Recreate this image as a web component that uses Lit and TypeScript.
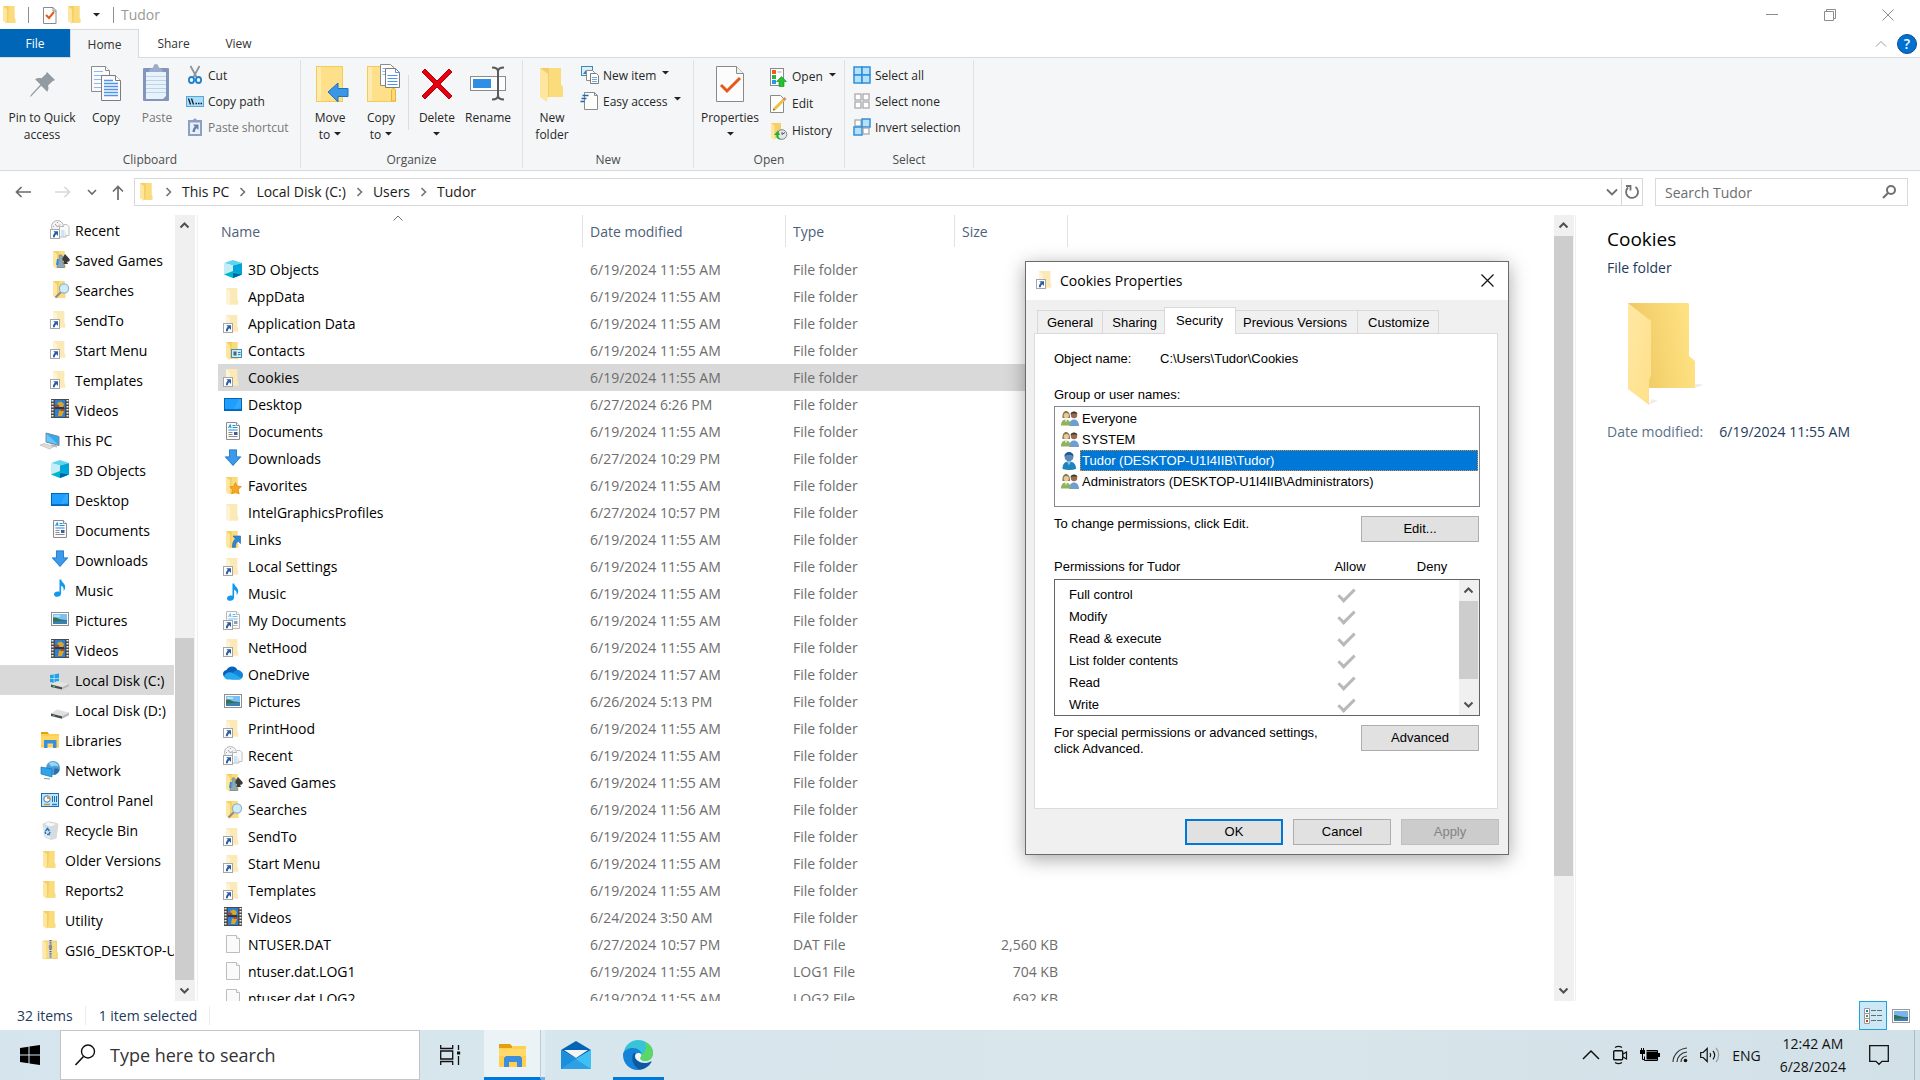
import { LitElement, html, svg, css, nothing, TemplateResult } from "lit";
import { customElement } from "lit/decorators.js";
import { classMap } from "lit/directives/class-map.js";

/* ---------- icon parts ---------- */

const folderPart = svg`
  <path d="M3 1h11.4v12l.9.8v4H6z" fill="#f3cf66"/>
  <path d="M9 1h5.4v12l.9.8v4H8z" fill="#fbdc7c"/>
  <path d="M3 1l4 3.2v11l-.5 3.8L3 16z" fill="#ffe69f"/>`;
const palePart = svg`
  <path d="M3 1h11.4v12l.9.8v4H6z" fill="#fbeab8"/>
  <path d="M3 1l4 3.2v11l-.5 3.8L3 16z" fill="#fdf4d6"/>`;
const linkPart = svg`
  <rect x=".5" y="9.5" width="9" height="9" fill="#fff" stroke="#a6a6a6"/>
  <path d="M3.300 11.200H8v4.700l-1.600-1.600c-1 .6-1.500 1.400-1.600 3H2.900c0-2 .6-3.500 2-4.500z" fill="#2a5da8"/>`;
const docPart = svg`
  <path d="M3.500.5h10l3 3v14h-13z" fill="#fafafa" stroke="#8c8c8c"/>
  <path d="M13.500.5v3h3" fill="#fff" stroke="#8c8c8c"/>
  <path d="M5.500 6l1.800-3.500L8 6M6 4.800h2M9.500 3.500h3M9.500 5.500h5M5.500 8h9" stroke="#1e90dd" fill="none"/>
  <path d="M5.500 10.500h4M5.500 12.500h4M5.500 14.500h9" stroke="#8c8c8c"/>
  <rect x="11" y="10" width="3.500" height="3" fill="#3b5f96"/>`;
const fadedDoc = svg`<g opacity=".6">${docPart}</g>`;
const cubePart = svg`
  <path d="M1 3l9-3 9 3-9 2.500z" fill="#5fd4f0"/>
  <path d="M1 3l9 2.500V18l-9-3.500z" fill="#c5edf7"/>
  <path d="M10 5.500L19 3v11.500L10 18z" fill="#00a4d8"/>
  <path d="M1 14.500l9-3.500 9 3.500L10 18z" fill="#00b7c9"/>
  <path d="M10 13v5l9-3.500z" fill="#0063b1"/>`;

const parts: Record<string, TemplateResult> = {
  folder: folderPart,
  pale: palePart,
  paleLink: svg`${palePart}${linkPart}`,
  docLink: svg`${fadedDoc}${linkPart}`,
  cube: cubePart,
  file: svg`<path d="M3.500.5h10l3 3v14h-13z" fill="#fafafa" stroke="#bdbdbd"/><path d="M13.500.5v3h3" fill="#fff" stroke="#bdbdbd"/>`,
  doc: docPart,
  contacts: svg`${folderPart}
    <rect x="8.500" y="8.500" width="10" height="8" fill="#cdeaf8" stroke="#3f8fb8"/>
    <rect x="10.500" y="10.500" width="3" height="4" fill="#4d6478"/><path d="M15 11.500h2.500M15 13.500h2.500" stroke="#2f7fae"/>`,
  desktop: svg`<rect x="1.500" y="3.500" width="17" height="12" fill="#1e9fff" stroke="#0067b8"/>
    <path d="M10 15L16 4h2v8z" fill="#45b1ff" opacity=".5"/><path d="M2 14.500h16" stroke="#0a6fc0"/>`,
  downloads: svg`<path d="M6 .5h8v7h4.500L10 17 1.500 7.500H6z" fill="#2f8be0"/><path d="M6.500 1h7v7h3.800L10 16.200 2.700 8h3.800z" fill="#3d9aeb" stroke="#2477c9" stroke-width=".6"/>`,
  favorites: svg`${folderPart}<path d="M12.500 6.500l1.700 3.500 4.200.6-3.100 2.800.9 4.600-3.900-2-3.600 1.800.7-4-2.600-3 3.800-.6z" fill="#f5a623" stroke="#d98410" stroke-width=".6"/>`,
  links: svg`${folderPart}<path d="M10 6h7.500v7.500l-2.400-2.200c-2 1.200-2.600 3-2.600 6H9.300c0-4 1-6.500 3.100-8.400z" fill="#2f86d8" stroke="#1f62a8" stroke-width=".6"/>`,
  music: svg`<path d="M9.500-.5h1.700c.4 3 4 4 4 7.500 0 1.800-.6 3-1.600 4.200.5-3-.5-4.700-2.500-5.400v7.700c0 2-1.800 3.300-3.800 3.300C5.300 16.800 4 15.900 4 14.400c0-1.700 1.700-3 3.700-3 .7 0 1.300.1 1.800.4z" fill="#1199ee"/>`,
  onedrive: svg`
    <path d="M4.500 13C1.500 13 0 11 0 9s1.600-3.700 3.500-3.900C4.700 2.900 6.700 1.500 9 1.500c2.800 0 4.700 1.500 5.600 3.800z" fill="#0a5fb8"/>
    <path d="M10 7l4-2c3 0 6 2 6 5.300 0 2.500-1.900 4.200-4.300 4.200H8z" fill="#1284dc"/>
    <path d="M1 11.500C2 8.500 6 6 10 8.200l8.800 5c-.8.9-2 1.300-3.100 1.300H4.500c-1.700 0-3-1.500-3.500-3z" fill="#27a9f0"/>`,
  pictures: svg`<rect x="1.500" y="2.500" width="17" height="13" fill="#fff" stroke="#8f8f8f"/>
    <rect x="3" y="4" width="14" height="10" fill="#7cc0f2"/>
    <path d="M3 8c3-1.500 5 1 8 1.500 2 .3 4 .3 6 .8V14H3z" fill="#33734f"/><path d="M3 11.500c4 0 9-1 14-1V14H3z" fill="#3a7fb5"/><path d="M4 6h6" stroke="#fff"/>`,
  videos: svg`<rect x="1" y="-1" width="18" height="19" fill="#4a4a4a"/>
    <path d="M2.500 0v17M17.500 0v17" stroke="#f2f2f2" stroke-width="2" stroke-dasharray="1.600 1.400"/>
    <rect x="5" y="0" width="10" height="8" fill="#2c7fd4"/><rect x="5" y="9" width="10" height="8" fill="#2c7fd4"/>
    <path d="M7 3l4-1.500 3 2.500-1 3h-3z" fill="#d8a728"/><path d="M5 5h4v2H5z" fill="#c43d2c"/>
    <path d="M9 10.500l5 .5-2 5H8z" fill="#d8a728"/><path d="M11 9h3v2h-3z" fill="#c43d2c"/><path d="M5 7h9v2H5z" fill="#2b3a3a"/>`,
  recent: svg`<g><circle cx="7.500" cy="6.500" r="6" fill="#f4f4f4" stroke="#b5b5b5"/><path d="M7.500 2v1M3 6.500h1M7.500 7L10 4.500M5 4l2.500 3" stroke="#a0a0a0" fill="none"/>
    <path d="M9.500 6.500h5l1.500 1.500v9H9.500z" fill="#f8fbfd" stroke="#b5b5b5"/><path d="M13.500 4.500h3.500l2 2v9h-3" fill="#fafafa" stroke="#c0c0c0"/><path d="M11 11h3.500M11 13h3.500M11 15h3.500" stroke="#9fd0ef"/></g>${linkPart}`,
  games: svg`${folderPart}
    <path d="M15 4l4.500 5c.8 1.700-.6 3.200-2.500 2.700L18 14h-5l1-3c-1.800 0-2.600-1.600-1.500-3z" fill="#3a3a3a"/>
    <path d="M9 5.500a2 2 0 0 1 3.500 1.500l-.5 1.500 1 4 1.500 3v2H7l.3-2 1.700-3.500.3-3.500z" fill="#8da9b8" stroke="#5c7a8c" stroke-width=".6"/><path d="M8 9l-1 6" stroke="#2f86d8" stroke-width="2"/>`,
  searches: svg`${folderPart}<path d="M11 12l-5.500 5.500" stroke="#8d8d8d" stroke-width="2.200"/><circle cx="14" cy="8.500" r="4.600" fill="#cfeaf8" stroke="#8fb4c8" stroke-width="1.200"/>`,
  pc: svg`<path d="M6 3l13 3.500v9L6 12z" fill="#33a9f0" stroke="#7a8790"/><path d="M6.500 3.800L18 14.500 6.500 11.500z" fill="#6cc5f8"/>
    <path d="M11 14l6 1.500v2l-5-1z" fill="#b9b9b9"/><path d="M0 15l4-1.500 10 3-4.500 2.500z" fill="#dcdcdc" stroke="#b4b4b4" stroke-width=".6"/>`,
  driveC: svg`<path d="M0 5l3.700-.6v3.800H0zM4.500 4.300L9 3.600v4.600H4.500zM0 9h3.700v3.700L0 12.100zM4.500 9H9v4.500l-4.500-.7z" fill="#18a5ee"/>
    <path d="M1 14.500L7 11l12 3-7 3.300z" fill="#e3e3e3"/><path d="M1 14.500l11 2.800v2.200L1 17z" fill="#4b4b4b"/><path d="M12 17.300l7-3.300v2.300l-7 3.200z" fill="#b9b9b9"/><path d="M3 16.400l2 .5" stroke="#3ad16a" stroke-width="1.200"/>`,
  driveD: svg`<path d="M1 13.500L7 9.500l12 3-7 3.800z" fill="#e0e0e0"/><path d="M1 13.500l11 2.800v2.500L1 16z" fill="#4b4b4b"/><path d="M12 16.300l7-3.800v2.700l-7 3.600z" fill="#b9b9b9"/><path d="M3 15.500l2 .5" stroke="#3ad16a" stroke-width="1.200"/>`,
  libraries: svg`<path d="M1 2h6.500L9 4h10v13.500H1z" fill="#ffcf4f"/><path d="M1 2h6.500L9 4H1z" fill="#e0a010"/><path d="M1 6h18v9H1z" fill="#ffd763"/><path d="M4 18v-8h12.500v8H13v-4.500H7.500V18z" fill="#3b8fdd"/>`,
  network: svg`<g transform="translate(1)"><circle cx="12" cy="8" r="7" fill="#4a9fd8"/><path d="M8 3c3-2 8-1 9.500 3-2 1-3-1-5 0S9 6 8 3z" fill="#9cd3f2"/><path d="M13 9c2-1 4 0 5.500.5C18 12 16 14.500 13 15z" fill="#2d6fa8"/>
    <path d="M0 7l11 2v8L0 14z" fill="#2aa5ee" stroke="#2b6d9e" stroke-width=".7"/><path d="M3 18.500l6 .5" stroke="#8a9aa5"/></g>`,
  control: svg`<g transform="translate(1)"><rect x=".5" y="3.500" width="17" height="13" fill="#bfe6fb" stroke="#1b6fb5"/><circle cx="6" cy="9" r="3.200" fill="#f5fbff" stroke="#2a7fc7"/><path d="M6 9V5.800A3.200 3.200 0 0 1 9.200 9z" fill="#f29a2e"/>
    <path d="M11.500 6v6M13.500 6v6M15.500 6v6" stroke="#1b6fb5"/><path d="M3 14.500h6" stroke="#e88b22" stroke-width="1.500"/><path d="M11 14.500h5" stroke="#2a7fc7" stroke-width="1.500"/></g>`,
  bin: svg`<g transform="translate(1)"><path d="M2 4l7-2 8 2-2 14-5 1.500L4 17z" fill="#eceff1" stroke="#c4cacd" stroke-width=".7"/><path d="M2 4l7 2 8-2-1.500 14-5.500 1.500z" fill="#d6dbde"/><path d="M3 4.500l4-3 4 1.500 4 0-2 3-4 1z" fill="#f7f7f7" stroke="#c8cdd0" stroke-width=".6"/>
    <path d="M4.500 11l2-2.500 2 2.500M9 12l-1 2.500H6M4.800 14l-.6-2.500" fill="none" stroke="#1f78cc" stroke-width="1.500"/></g>`,
  zip: svg`<g transform="translate(1)"><path d="M2 1h13.500v11l.8.800V18.500H2z" fill="#fbdc7c" stroke="#e4bd4d" stroke-width=".6"/><path d="M2 1l3 1.500v17L2 18z" fill="#ffe9a8"/><rect x="7.500" y="0" width="4" height="18" fill="#dcdcdc"/><path d="M9.500 0v18" stroke="#5c5c5c" stroke-width="2" stroke-dasharray="1.200 1"/><rect x="7.800" y="5" width="3.400" height="4" rx="1" fill="#8b8b8b"/></g>`,
};

const icon = (name: string) => html`<svg class="ico" viewBox="0 0 20 20" aria-hidden="true">${parts[name]}</svg>`;
const pic = (w: number, h: number, body: TemplateResult) =>
  html`<svg width=${w} height=${h} viewBox="0 0 ${w} ${h}" fill="none" aria-hidden="true">${body}</svg>`;

const caret = html`<svg class="caret" width="7" height="4" viewBox="0 0 7 4" aria-hidden="true"><path d="M0 0h7L3.500 3.500z" fill="#222"/></svg>`;
const chevUp = pic(11, 11, svg`<path d="M1.500 7.500l4-4 4 4" stroke="#505050" stroke-width="2"/>`);
const chevDown = pic(11, 11, svg`<path d="M1.500 3.500l4 4 4-4" stroke="#505050" stroke-width="2"/>`);
const crumbSep = pic(7, 10, svg`<path d="M1.500 1l4 4-4 4" stroke="#6e6e6e" stroke-width="1.500"/>`);

const checkDoc = svg`<path d="M1 1h9.500l3 3v13H1z" transform="translate(.5 .5)" fill="#fff" stroke="#8a8a8a"/><path d="M11 1.500v3.500h3" stroke="#8a8a8a"/><path d="M4 9l3 3 5-6" stroke="#e8571a" stroke-width="2"/>`;

const big: Record<string, TemplateResult> = {
  pin: svg`<path transform="translate(5 1)" d="M19 6l8 8-2.500 1.200-4.500 4.300c.8 2.400.6 4.300-.8 6.300l-6-6L3.500 30 2 31l.8-2 9.600-10.500-5.300-5.300c2-1.500 4.200-1.600 6.400-.9l4.300-4z" fill="#919ba1"/>`,
  copy: svg`<path d="M4.500 1.500h14l4 4v21h-18z" fill="#fafafa" stroke="#8c8c8c"/><path d="M18.500 1.500v4h4" fill="#fff" stroke="#8c8c8c"/><path d="M7 6.500h9M7 10.500h9M7 14.500h8M7 18.500h8M7 22.500h8" stroke="#8cbaf0"/>
    <path d="M14.500 10.500h14l5 5v20h-19z" fill="#fafafa" stroke="#7c7c7c"/><path d="M28.500 10.500v5h5" fill="#fff" stroke="#7c7c7c"/><path d="M17 15.500h9M17 18.500h14M17 21.500h14M17 24.500h14M17 27.500h14M17 30.500h14" stroke="#4f93ef" stroke-width="1.500"/>`,
  paste: svg`<rect x="5" y="3" width="26" height="33" rx="1" fill="#8296bd"/><path d="M8 7h20v24l-3 3H8z" fill="#e8f2fa"/><path d="M8 11.500h20M8 15.500h20M8 19.500h20M8 23.500h20M8 27.500h20" stroke="#bdd3e6"/><path d="M11 7c0-4 4-3 4.500-5.500a2.500 2.500 0 0 1 5 0C21 4 25 3 25 7z" fill="#9aacc9"/>`,
  move: svg`<path d="M5 1h27v36H5z" fill="#f5cb52"/><path d="M6 2h25v34H6z" fill="#ffe08a"/><path d="M6 2h4v34H6z" fill="#ffeab0"/><path d="M17 27L27 18v5.500h10v8H27V37z" fill="#3a96e6" stroke="#2172ba"/>`,
  copyto: svg`<path d="M5 1h27v22l2 2v12H5z" fill="#f5cb52"/><path d="M6 2h25v34H6z" fill="#ffe08a"/><path d="M6 2h4v34H6z" fill="#ffeab0"/><path d="M29.500 36V25l2-2 2 2v11z" fill="#ffd870" stroke="#e2b544"/>
    <path d="M18.500-.5h10l3 3v18h-13z" fill="#fff" stroke="#8c8c8c"/><path d="M20.500 3.500h6M20.500 6.500h6M20.500 9.500h6" stroke="#8cbaf0"/><path d="M23.500 3.500h10l4 4v15h-14z" fill="#fff" stroke="#7c7c7c"/><path d="M33.500 3.500v4h4M25.500 10.500h10M25.500 13.500h10M25.500 16.500h10M25.500 19.500h10" stroke="#4f93ef"/>`,
  del: svg`<path d="M4 7l3-3 12 12L31 4l3 3-12 12 12 12-3 3-12-12L7 34l-3-3 12-12z" fill="#e8000f" stroke="#b40010" stroke-width="1"/>`,
  rename: svg`<rect x="1.500" y="11.500" width="35" height="14" fill="#fdfdfd" stroke="#8c8c8c"/><rect x="4" y="14" width="18" height="9" fill="#2f8fe4"/><path d="M23 2.500c4 0 6 1 6 4v24c0 3-2 4-6 4M35 2.500c-4 0-6 1-6 4v24c0 3 2 4 6 4" stroke="#5a5a5a" stroke-width="2"/>`,
  folder: svg`<path d="M7 3h21v17l2 2v10H12z" fill="#f2cd68"/><path d="M16 3h12v17l2 2v10H16z" fill="#fbdc7c"/><path d="M7 3l8 6v20l-1 8-7-5z" fill="#ffe69f"/>`,
  props: svg`<path d="M5.500 1.500h20l7 7v28h-27z" fill="#fcfcfc" stroke="#8a8a8a"/><path d="M25.500 1.500v7h7" fill="#f0f0f0" stroke="#8a8a8a"/><path d="M10 20l6 6L29 13" stroke="#e8571a" stroke-width="3"/>`,
};
const bigIcon = (n: string) => pic(38, 38, big[n]);

const sq = (x: number, y: number, on: boolean) => on
  ? svg`<rect x=${x} y=${y} width="8" height="8" fill="#b5e1fb" stroke="#2e8fdc" stroke-width="1.500"/>`
  : svg`<rect x=${x + 1} y=${y + 1} width="6" height="6" fill="#fff" stroke="#a3a3a3" stroke-width="1.200"/>`;

const small: Record<string, TemplateResult> = {
  cut: svg`<path d="M4.500 0l6 11M13.500 0l-6 11" stroke="#8c959b" stroke-width="1.800"/><ellipse cx="5.500" cy="14" rx="2.600" ry="3" stroke="#1d83cf" stroke-width="1.800"/><ellipse cx="12.500" cy="14" rx="2.600" ry="3" stroke="#1d83cf" stroke-width="1.800"/>`,
  path: svg`<rect x=".5" y="4.500" width="17" height="10" fill="#abdcf9" stroke="#5aa6d6"/><path d="M2.500 6.500l2 6M5.500 6.500l2 6M9.500 11.500h1.500M12 11.500h1.500M14.500 11.500h1.500" stroke="#10212e" stroke-width="1.300"/>`,
  pasteLink: svg`<rect x="2" y="2" width="14" height="16" fill="#8d9fc2"/><rect x="4" y="4.500" width="10" height="11.500" fill="#e8f0f8"/><path d="M6 4c0-3 2-2 3-4 1 2 3 1 3 4z" fill="#8d9fc2"/><path d="M7 6.500h5.500v5.500l-1.700-1.700c-1.200.7-1.800 1.700-1.800 3.700H6.500c0-2.300.7-4 2.300-5.500z" fill="#6a7fa8"/>`,
  item: svg`<rect x=".5" y=".5" width="11" height="9" fill="#d8f0fc" stroke="#3d8ab8"/><path d="M2 8l3-4 4 4z" fill="#3d7ba8"/><path d="M5.500 4.500h6l2 2v8h-8z" fill="#fff" stroke="#8c8c8c"/><path d="M9.500 7.500h6l2 2v8h-8z" fill="#fff" stroke="#7c7c7c"/><path d="M11 11.500h5M11 13.500h5M11 15.500h5" stroke="#6ea5df"/>`,
  easy: svg`<path d="M4.500.5h10l3 3v14h-13z" transform="translate(-1)" fill="#fdfdfd" stroke="#8a8a8a"/><path d="M13.500.5v3h3" stroke="#8a8a8a"/><path d="M1.500 3.500h6M.5 6.500h5M-.5 9.500h4" stroke="#2068b0" stroke-width="1.300"/>`,
  open: svg`<rect x=".5" y=".5" width="13" height="17" fill="#fdfdfd" stroke="#8a8a8a"/><rect x="2" y="2" width="4" height="4" fill="#f25a1d"/><rect x="2" y="7" width="4" height="4" fill="#27b53b"/><rect x="2" y="12" width="4" height="4" fill="#2795e9"/><path d="M7.500 4h4" stroke="#aaa"/><path d="M11.500 8.500l5 5h-2.500v5H9v-5H6.500z" fill="#23c030" stroke="#168a22" stroke-width=".6"/>`,
  edit: svg`<path d="M.5.500h10l3 3v14H.5z" fill="#fdfdfd" stroke="#8a8a8a"/><path d="M4 14.500L14 4.500" stroke="#f0c040" stroke-width="3"/><path d="M13.500 5l2-2" stroke="#d88b6a" stroke-width="3"/><path d="M3 15.500l.6-2 1.400 1.400z" fill="#444"/>`,
  history: svg`<path d="M1 1h10v12l-6 4z" fill="#f5d06a"/><path d="M1 1l3.500 3v14L1 15.500z" fill="#ffe69f"/><circle cx="12" cy="12.500" r="4.800" fill="#e4e8ea" stroke="#7a868d"/><path d="M12 12.500l3-2M12 12.500V10" stroke="#555"/><path d="M9 17.500c-2.500-1-3-3-2.500-4.500H4l4-4.500L10 13H8.500c-.3 1.500.2 3 2.500 4.500z" fill="#23b033"/>`,
  all: svg`${sq(1, 1, true)}${sq(9, 1, true)}${sq(1, 9, true)}${sq(9, 9, true)}`,
  none: svg`${sq(1, 1, false)}${sq(9, 1, false)}${sq(1, 9, false)}${sq(9, 9, false)}`,
  invert: svg`${sq(1, 1, false)}${sq(9, 1, true)}${sq(1, 9, true)}${sq(9, 9, false)}`,
};
const smallIcon = (n: string) => pic(18, 18, small[n]);

/* ---------- data ---------- */

type NavItem = [label: string, icon: string, level: 1 | 2];
const navItems: NavItem[] = [
  ["Recent", "recent", 2], ["Saved Games", "games", 2], ["Searches", "searches", 2], ["SendTo", "paleLink", 2],
  ["Start Menu", "paleLink", 2], ["Templates", "paleLink", 2], ["Videos", "videos", 2], ["This PC", "pc", 1],
  ["3D Objects", "cube", 2], ["Desktop", "desktop", 2], ["Documents", "doc", 2], ["Downloads", "downloads", 2],
  ["Music", "music", 2], ["Pictures", "pictures", 2], ["Videos", "videos", 2], ["Local Disk (C:)", "driveC", 2],
  ["Local Disk (D:)", "driveD", 2], ["Libraries", "libraries", 1], ["Network", "network", 1],
  ["Control Panel", "control", 1], ["Recycle Bin", "bin", 1], ["Older Versions", "folder", 1],
  ["Reports2", "folder", 1], ["Utility", "folder", 1], ["GSI6_DESKTOP-U1I4IIB", "zip", 1],
];

const usual = "6/19/2024 11:55 AM";
type Entry = [name: string, icon: string, date?: string, type?: string, size?: string];
const entries: Entry[] = [
  ["3D Objects", "cube"], ["AppData", "pale"], ["Application Data", "paleLink"], ["Contacts", "contacts"],
  ["Cookies", "paleLink"], ["Desktop", "desktop", "6/27/2024 6:26 PM"], ["Documents", "doc"],
  ["Downloads", "downloads", "6/27/2024 10:29 PM"], ["Favorites", "favorites"],
  ["IntelGraphicsProfiles", "pale", "6/27/2024 10:57 PM"], ["Links", "links"], ["Local Settings", "paleLink"],
  ["Music", "music"], ["My Documents", "docLink"], ["NetHood", "paleLink"],
  ["OneDrive", "onedrive", "6/19/2024 11:57 AM"], ["Pictures", "pictures", "6/26/2024 5:13 PM"],
  ["PrintHood", "paleLink"], ["Recent", "recent"], ["Saved Games", "games"],
  ["Searches", "searches", "6/19/2024 11:56 AM"], ["SendTo", "paleLink"], ["Start Menu", "paleLink"],
  ["Templates", "paleLink"], ["Videos", "videos", "6/24/2024 3:50 AM"],
  ["NTUSER.DAT", "file", "6/27/2024 10:57 PM", "DAT File", "2,560 KB"],
  ["ntuser.dat.LOG1", "file", usual, "LOG1 File", "704 KB"],
  ["ntuser.dat.LOG2", "file", usual, "LOG2 File", "692 KB"],
];

/* ---------- shared styles ---------- */

const base = css`
  *, *::before, *::after { box-sizing: border-box; }
  button, input { font: inherit; color: inherit; margin: 0; padding: 0; border: 0; background: none; border-radius: 0; }
  button { display: flex; align-items: center; justify-content: center; white-space: nowrap; }
  a { color: inherit; text-decoration: none; }
  svg { display: block; flex: none; overflow: visible; }
  .ico { width: 20px; height: 20px; }
`;

/* ---------- scrollbar ---------- */

@customElement("scroll-rail")
class ScrollRail extends LitElement {
  static properties = { from: { type: Number }, span: { type: Number } };
  declare from: number;
  declare span: number;
  static styles = [base, css`
    :host { display: flex; flex-direction: column; width: 20px; flex: none; background: #f0f0f0; }
    button { height: 21px; flex: none; width: 19px; }
    .track { flex: 1; display: flex; flex-direction: column; }
    .thumb { width: 19px; background: #cdcdcd; }
  `];
  render() {
    return html`
      <button aria-label="Scroll up">${chevUp}</button>
      <div class="track">
        <div style="flex:${this.from}"></div>
        <div class="thumb" style="flex:${this.span}"></div>
        <div style="flex:${100 - this.from - this.span}"></div>
      </div>
      <button aria-label="Scroll down">${chevDown}</button>`;
  }
}

/* ---------- ribbon ---------- */

@customElement("explorer-ribbon")
class ExplorerRibbon extends LitElement {
  static styles = [base, css`
    :host { display: block; font-size: 12px; color: #262626; }
    .tabs { display: flex; height: 29px; margin-bottom: -1px; padding-right: 3px; }
    .tab { width: 69px; color: #333; }
    .tab.file { width: 70px; background: #0067b8; color: #fff; margin-bottom: 1px; }
    .tab.on { background: #f5f6f7; border: 1px solid #d9dadb; border-bottom: 0; }
    .tab.view { width: 61px; }
    .tools { margin-left: auto; display: flex; align-items: center; gap: 10px; }
    .help { width: 20px; height: 20px; border-radius: 50%; background: #0071d1; border: 1px solid #0a508f; color: #fff; font-size: 14px; font-weight: 600; }
    .bar { display: flex; background: #f5f6f7; border: solid #d9dadb; border-width: 1px 0; height: 114px; padding: 2px 0; }
    .group { display: grid; grid-template-rows: 1fr 16px; border-right: 1px solid #e0e1e2; }
    .body { display: flex; padding-left: 2px; }
    .name { text-align: center; line-height: 16px; color: #4c4c4c; }
    .big { flex-direction: column; justify-content: flex-start; padding-top: 5px; line-height: 17px; white-space: normal; }
    .big span { margin-top: 6px; }
    .big .caret { display: inline-block; vertical-align: 3px; margin-left: 4px; }
    .big .caret.alone, .alone .caret { margin-left: 0; }
    .off { color: #767676; }
    .w1 { width: 48px; } .w2 { width: 54px; } .w3 { width: 80px; } .w4 { width: 68px; }
    .list { display: flex; flex-direction: column; padding: 2px 0 0 2px; }
    .list.wide { padding-left: 6px; }
    .list button { height: 26px; gap: 4px; justify-content: flex-start; }
    .list.open { padding-top: 3px; }
    .list.open button { height: 27px; }
    .list .caret { margin: 0 0 4px 2px; }
    .rule { width: 1px; height: 55px; margin: 15px 4px 0 3px; background: #dcdddf; }
    .g1 { width: 301px; } .g2 { width: 222px; } .g3 { width: 171px; } .g4 { width: 151px; } .g5 { width: 129px; }
  `];
  private big(name: string, label: unknown, cls: string) {
    return html`<button class="big ${cls}">${bigIcon(name)}<span>${label}</span></button>`;
  }
  private row(name: string, label: string, menu = false, cls = "") {
    return html`<button class=${cls}>${smallIcon(name)}${label}${menu ? caret : nothing}</button>`;
  }
  render() {
    return html`
      <nav class="tabs">
        <button class="tab file">File</button>
        <button class="tab on">Home</button>
        <button class="tab">Share</button>
        <button class="tab view">View</button>
        <div class="tools">
          <button aria-label="Minimize the ribbon">${pic(12, 8, svg`<path d="M1 6.500l5-5 5 5" stroke="#9a9a9a"/>`)}</button>
          <button class="help" aria-label="Help">?</button>
        </div>
      </nav>
      <div class="bar">
        <section class="group g1">
          <div class="body">
            ${this.big("pin", html`Pin to Quick<br>access`, "w3")}
            ${this.big("copy", "Copy", "w1")}
            ${this.big("paste", "Paste", "w2 off")}
            <div class="list">
              ${this.row("cut", "Cut")}${this.row("path", "Copy path")}${this.row("pasteLink", "Paste shortcut", false, "off")}
            </div>
          </div>
          <div class="name">Clipboard</div>
        </section>
        <section class="group g2">
          <div class="body">
            ${this.big("move", html`Move<br>to${caret}`, "w2")}
            ${this.big("copyto", html`Copy<br>to${caret}`, "w1")}
            <div class="rule"></div>
            ${this.big("del", html`Delete<br>${caret}`, "w1 alone")}
            ${this.big("rename", "Rename", "w2")}
          </div>
          <div class="name">Organize</div>
        </section>
        <section class="group g3">
          <div class="body">
            ${this.big("folder", html`New<br>folder`, "w2")}
            <div class="list">${this.row("item", "New item", true)}${this.row("easy", "Easy access", true)}</div>
          </div>
          <div class="name">New</div>
        </section>
        <section class="group g4">
          <div class="body">
            ${this.big("props", html`Properties<br>${caret}`, "w4 alone")}
            <div class="list wide open">${this.row("open", "Open", true)}${this.row("edit", "Edit")}${this.row("history", "History")}</div>
          </div>
          <div class="name">Open</div>
        </section>
        <section class="group g5">
          <div class="body">
            <div class="list wide">${this.row("all", "Select all")}${this.row("none", "Select none")}${this.row("invert", "Invert selection")}</div>
          </div>
          <div class="name">Select</div>
        </section>
      </div>`;
  }
}

/* ---------- properties dialog ---------- */

const groupIcon = pic(18, 16, svg`
  <circle cx="13" cy="4" r="3.200" fill="#9a6b48"/><path d="M9.500 3.500c0-4 7-4 7 0l-1-1h-4z" fill="#3b3b3b"/><path d="M8 15c0-4 2-6.500 5-6.500s5 2.500 5 6.500z" fill="#6f9fd0"/>
  <path d="M1.500 7c-1-9.500 8-9.500 7.500 0z" fill="#8a7a4a"/><circle cx="5.300" cy="4.600" r="2.600" fill="#e8c9a0"/><path d="M0 14.500c0-4 2-6 5-6s4.500 2 4.500 6z" fill="#8fb25c"/><path d="M4 8.500h2l-1 3z" fill="#fff"/>`);
const userIcon = pic(18, 18, svg`
  <circle cx="8" cy="5" r="4.400" fill="#5b88b8"/><path d="M3.500 4.500C3-1.500 13-1.500 12.500 4.500L10 3H6z" fill="#1f5f90"/><path d="M1.500 17c0-5 2-7.500 6.500-7.500s7 2.500 7 7.500c-4 1.300-9 1.300-13.500 0z" fill="#1d84bd"/><path d="M6 9.500h4l-2 4z" fill="#8fc6e6"/>`);

@customElement("properties-dialog")
class PropertiesDialog extends LitElement {
  static styles = [base, css`
    :host { display: block; background: #f0f0f0; border: 1px solid #6b6b6b; box-shadow: 0 4px 18px rgba(0, 0, 0, .35); font: 13px/16px "Liberation Sans", Arial, sans-serif; color: #000; }
    header { display: flex; align-items: center; gap: 4px; height: 38px; padding: 0 14px 2px 10px; background: #fff; font: 14px "Open Sans", "Noto Sans", sans-serif; }
    header button { margin-left: auto; }
    .tabs { display: flex; align-items: flex-end; padding: 7px 0 0 11px; margin-bottom: -1px; position: relative; }
    .tab { height: 24px; padding: 2px 9px 0; border: 1px solid #d9d9d9; margin-right: -1px; background: #f0f0f0; }
    .tab.s { padding: 2px 7px 0 9px; }
    .tab.on { height: 27px; padding: 0 12px 1px 11px; background: #fff; border-bottom: 0; }
    .tab.p { padding: 2px 10px 0 7px; }
    .tab.c { padding: 2px 8px 0 10px; }
    .panel { margin: 0 10px 0 8px; padding: 17px 17px 51px 19px; background: #fff; border: 1px solid #dcdcdc; }
    .object { display: grid; grid-template-columns: 106px 1fr; }
    .label { margin: 20px 0 3px; }
    .users { list-style: none; margin: 0; padding: 1px 1px 14px 6px; border: 1px solid #828790; }
    .users li { display: flex; align-items: center; height: 21px; }
    .users span { flex: 1; margin-left: 1px; padding-left: 2px; line-height: 21px; }
    .users .sel { background: #0078d7; color: #fff; outline: 1px dotted #e08a3c; outline-offset: -1px; }
    .line { display: flex; justify-content: space-between; margin-top: 9px; padding-right: 1px; }
    .line p { margin: 0; width: 290px; }
    .btn { height: 26px; width: 118px; background: #e1e1e1; border: 1px solid #adadad; }
    .heads { display: flex; margin: 17px 7px 4px 0; }
    .heads b { font-weight: 400; width: 82px; text-align: center; }
    .heads span { flex: 1; }
    .perms { display: flex; border: 1px solid #646464; }
    table { flex: 1; border-collapse: collapse; table-layout: fixed; margin-top: 3px; }
    td, th { padding: 2px 0 0; height: 22px; font-weight: 400; text-align: left; }
    th { padding-left: 14px; }
    .allow { width: 82px; text-align: center; }
    .deny { width: 72px; }
    input { appearance: none; display: inline-block; width: 18px; height: 18px; vertical-align: middle; }
    input::before { content: ""; display: block; width: 17px; height: 9px; margin: 3px 0 0 1px; border: solid #b9b9b9; border-width: 0 0 3px 3px; transform: rotate(-45deg); }
    footer { display: flex; justify-content: flex-end; gap: 10px; padding: 10px 9px 9px; }
    footer .btn { width: 98px; }
    .btn.ok { border: 2px solid #0078d7; }
    .btn[disabled] { background: #ccc; border-color: #bfbfbf; color: #838383; }
  `];
  render() {
    const users = ["Everyone", "SYSTEM", "Tudor (DESKTOP-U1I4IIB\\Tudor)", "Administrators (DESKTOP-U1I4IIB\\Administrators)"];
    const perms = ["Full control", "Modify", "Read & execute", "List folder contents", "Read", "Write"];
    return html`
      <header>${icon("paleLink")}<span>Cookies Properties</span>
        <button aria-label="Close">${pic(13, 13, svg`<path d="M.5.500l12 12M12.500.5l-12 12" stroke="#111" stroke-width="1.200"/>`)}</button></header>
      <div class="tabs">
        <button class="tab">General</button><button class="tab s">Sharing</button><button class="tab on">Security</button>
        <button class="tab p">Previous Versions</button><button class="tab c">Customize</button>
      </div>
      <div class="panel">
        <div class="object"><span>Object name:</span><span>C:\\Users\\Tudor\\Cookies</span></div>
        <div class="label">Group or user names:</div>
        <ul class="users">
          ${users.map((u, i) => html`<li>${i === 2 ? userIcon : groupIcon}<span class=${classMap({ sel: i === 2 })}>${u}</span></li>`)}
        </ul>
        <div class="line"><p>To change permissions, click Edit.</p><button class="btn">Edit...</button></div>
        <div class="heads"><span>Permissions for Tudor</span><b>Allow</b><b>Deny</b></div>
        <div class="perms">
          <table>
            ${perms.map((p, i) => html`<tr><th scope="row"><label for="p${i}">${p}</label></th>
              <td class="allow"><input id="p${i}" type="checkbox" checked disabled></td><td class="deny"></td></tr>`)}
          </table>
          <scroll-rail .from=${0} .span=${84}></scroll-rail>
        </div>
        <div class="line"><p>For special permissions or advanced settings, click Advanced.</p><button class="btn">Advanced</button></div>
      </div>
      <footer><button class="btn ok">OK</button><button class="btn">Cancel</button><button class="btn" disabled>Apply</button></footer>`;
  }
}

/* ---------- taskbar ---------- */

@customElement("task-bar")
class TaskBar extends LitElement {
  static styles = [base, css`
    :host { display: flex; height: 50px; background: linear-gradient(90deg, #d6e5ed, #d9e6ec 60%, #d2e0e7); color: #111; }
    .start { width: 60px; }
    .find { display: flex; align-items: center; gap: 15px; width: 360px; padding-left: 14px; background: #fff; border: 1px solid #c4c4c4; font-size: 18px; }
    .find input { flex: 1; min-width: 0; outline: 0; }
    .find input::placeholder { color: #333; opacity: 1; }
    .app { width: 62px; border-bottom: 3px solid transparent; padding-top: 3px; }
    .app.view { width: 64px; padding-right: 4px; }
    .app.live { background: #ecf3f7; border-color: #0078d7; width: 57px; border-right: 1px solid #b9cdd8; }
    .stack { width: 4px; background: #e2edf3; border-bottom: 3px solid #6cb1e6; }
    .app.run { width: 51px; margin-left: 6px; padding-right: 2px; border-color: #0078d7; }
    .tray { margin-left: auto; display: flex; align-items: center; gap: 12px; font-size: 14px; }
    .clock { flex-direction: column; line-height: 23px; margin: 0 11px 0 7px; }
    .peek { align-self: stretch; width: 6px; border-left: 1px solid #a9bcc6; margin-left: 13px; }
  `];
  render() {
    return html`
      <button class="start" aria-label="Start">${pic(20, 20, svg`<path d="M0 3l8.500-1.200v7.700H0zM9.500 1.600L20 0v9.500H9.500zM0 10.500h8.500v7.700L0 17zM9.500 10.500H20V20L9.500 18.400z" fill="#000"/>`)}</button>
      <label class="find">${pic(20, 22, svg`<circle cx="13" cy="7.500" r="6.500" stroke="#111" stroke-width="1.400"/><path d="M8.500 12.500L.5 21" stroke="#111" stroke-width="1.600"/>`)}
        <input type="text" placeholder="Type here to search" aria-label="Type here to search"></label>
      <button class="app view" aria-label="Task View">${pic(20, 20, svg`<path d="M.7 0v3.500h12V0M.7 20v-3.500h12V20M.7 6h12v8H.7zM18.500 0v5M18.500 11v9" stroke="#111" stroke-width="1.300"/><path d="M17 6.500h3.200v3H17z" fill="#111"/>`)}</button>
      <button class="app live" aria-label="File Explorer">${pic(27, 23, svg`<path d="M0 2h27v21H0z" fill="#ffcf4f"/><path d="M0 0h11l2 2v2H0z" fill="#e39f0c"/><path d="M0 5h27v7H0z" fill="#ffd969"/><path d="M5 23V14l2-2h14l2 2v9h-5v-5h-8v5z" fill="#3b8fdd"/>`)}</button>
      <div class="stack"></div>
      <button class="app" aria-label="Mail">${pic(30, 28, svg`<path d="M0 9L15 0l15 9-15 9z" fill="#0363b4"/><path d="M0 9l15 9 15-9v19H0z" fill="#28a8ea"/><path d="M0 9l15 9L0 28z" fill="#1b8fdc"/><path d="M0 28l15-10 15 10z" fill="#2f9fe6"/><path d="M15 18l15-9v19z" fill="#3fc0f5"/><path d="M3 9h24l-12 8z" fill="#f4f4f4"/>`)}</button>
      <button class="app run" aria-label="Microsoft Edge">${pic(30, 30, svg`
        <path d="M1 11C3 4 8.500 0 15 0c8 0 15 5.500 15 13 0 5-3.500 8-8 8-3 0-5-1.300-5-2.700 0-.8 1.300-1.300 1.300-3.500 0-3-3.300-6-8.300-6-4 0-7 1-9 2.200z" fill="#37c3d8"/>
        <path d="M22 2c5 2 8 6 8 11 0 5-3.500 8-8 8-3 0-5-1.300-5-2.700 0-.8 1.300-1.300 1.300-3.500C23 13 24 8 22 2z" fill="#5bd765"/>
        <path d="M0 15C0 10 5 8 10 8c5 0 8.500 3.200 8.500 6.500-6-2-9 3-7 8 1.300 3.200 4.500 6 7 7C8 32 0 24 0 15z" fill="#1583d8"/>
        <path d="M11 12.500c-3 4-2.500 12 5 17 5 .5 10-3 12.500-7.500.3-.6-.2-.8-.8-.5-8 4-16-.5-14-6.500z" fill="#0c59a4"/>
        <path d="M12 16c0-3 4.500-4 6.300-1.500 0 2-1.300 3-1.300 3.800 0 1.400 1.500 2.300 3 2.600-4 1.600-8-1-8-4.900z" fill="#f1f6f9"/>`)}</button>
      <div class="tray">
        <button aria-label="Show hidden icons">${pic(18, 10, svg`<path d="M1 9l8-8 8 8" stroke="#111" stroke-width="1.500"/>`)}</button>
        <button aria-label="Meet Now">${pic(16, 18, svg`<rect x="1.700" y="4.700" width="9" height="9" rx="1" stroke="#111" stroke-width="1.400"/><path d="M11 8l3.500-2v7L11 11M3 1.500c2-1.300 5-1.300 7 0M3 16.500c2 1.300 5 1.300 7 0" stroke="#111" stroke-width="1.200"/>`)}</button>
        <button aria-label="Battery">${pic(20, 14, svg`<rect x="6.500" y="3.500" width="11" height="8" fill="#000"/><path d="M6.500 2.500h11v10h-13v-4" stroke="#000"/><path d="M18 5h2v4h-2zM0 2h5v4H0zM1 0h1v3H1zM3 0h1v3H3z" fill="#000"/><path d="M2.500 5v6.500h2" stroke="#000"/>`)}</button>
        <button aria-label="Network">${pic(16, 16, svg`<circle cx="13.500" cy="13.500" r="1.800" fill="#111"/><path d="M9 15c0-3 2-5.500 6-6M5 15c0-5 4-9.500 10-10M1 15C1 8 7 1.500 15 1" stroke="#333" stroke-width="1.200"/>`)}</button>
        <button aria-label="Volume">${pic(20, 16, svg`<path d="M.7 5.500h2.500l4-4v13l-4-4H.7z" stroke="#111" stroke-width="1.200"/><path d="M10 6c.8 1.200.8 3 0 4.200M13 3.800c2 2.500 2 6 0 8.500" stroke="#111" stroke-width="1.200"/><path d="M16 1c3.500 4 3.500 10 0 14" stroke="#999" stroke-width="1.200"/>`)}</button>
        <button>ENG</button>
        <button class="clock"><span>12:42 AM</span><span>6/28/2024</span></button>
        <button aria-label="Notifications">${pic(20, 20, svg`<path d="M.7.700h18.600v15.600H13l-3 3-3-3H.7z" stroke="#111" stroke-width="1.300"/>`)}</button>
        <div class="peek"></div>
      </div>`;
  }
}

/* ---------- window ---------- */

@customElement("app-root")
class AppRoot extends LitElement {
  static styles = [base, css`
    :host { display: flex; flex-direction: column; position: relative; height: 100vh; overflow: hidden; background: #fff; color: #000; font: 14px "Open Sans", "Noto Sans", sans-serif; }
    .title { display: flex; align-items: center; height: 29px; color: #999; }
    .quick { display: flex; align-items: center; gap: 8px; padding-right: 7px; }
    .quick i { width: 1px; height: 16px; background: #8f8f8f; margin-right: 5px; }
    .quick i:last-child { margin: 0 0 0 5px; }
    .win { margin-left: auto; display: flex; padding-right: 3px; }
    .win button { width: 58px; height: 27px; }
    .address { display: flex; align-items: center; height: 44px; padding: 0 12px 2px 12px; color: #1a1a1a; }
    .arrows { display: flex; align-items: center; width: 122px; padding-left: 3px; gap: 16px; }
    .arrows button:first-child { margin-right: 8px; }
    .crumbs { flex: 1; display: flex; align-items: center; height: 28px; border: 1px solid #d9d9d9; margin-right: 12px; gap: 10px; }
    .crumbs .ico { margin: 0 -2px 0 2px; }
    .crumb { padding-bottom: 2px; }
    .crumbs .drop { margin-left: auto; margin-right: -7px; }
    .crumbs .again { width: 21px; height: 26px; border-left: 1px solid #d9d9d9; }
    .search { display: flex; align-items: center; width: 253px; height: 28px; border: 1px solid #d9d9d9; padding: 0 11px 0 9px; }
    .search input { flex: 1; min-width: 0; outline: 0; }
    .search input::placeholder { color: #6d6d6d; opacity: 1; }
    .main { flex: 1; min-height: 0; display: flex; overflow: hidden; }
    .nav { width: 175px; overflow: hidden; padding-right: 1px; }
    .nav a { display: flex; align-items: center; gap: 5px; height: 30px; padding-left: 50px; white-space: nowrap; overflow: hidden; }
    .nav a.top { padding-left: 40px; }
    .nav a.sel { background: #d9d9d9; }
    .files { flex: 1; min-width: 0; overflow: hidden; margin-left: 2px; border-left: 1px solid #f0f0f0; padding-left: 20px; }
    table { border-collapse: collapse; table-layout: fixed; width: 850px; }
    .c1 { width: 365px; } .c2 { width: 203px; } .c3 { width: 169px; } .c4 { width: 113px; }
    th { height: 41px; padding: 0; font-weight: 400; text-align: left; color: #4c607a; vertical-align: top; }
    th button { position: relative; width: 100%; height: 32px; justify-content: flex-start; padding-left: 7px; border-right: 1px solid #e2e2e2; }
    th:first-child button { padding-left: 3px; }
    .sort { position: absolute; left: 50%; top: 0; margin-left: -7px; }
    td { height: 27px; padding: 0 0 0 7px; color: #6d6d6d; white-space: nowrap; }
    td:first-child { padding-left: 5px; color: #000; }
    td:last-child { padding-right: 10px; text-align: right; }
    .file { display: flex; align-items: center; gap: 5px; }
    .sel td { background: #d9d9d9; }
    .preview { width: 345px; margin-left: 1px; border-left: 1px solid #f0f0f0; padding: 10px 0 0 31px; color: #1e395b; line-height: 20px; }
    .preview h1 { margin: 0; font-size: 19px; line-height: 28px; font-weight: 400; color: #000; }
    .preview p { margin: 5px 0 24px; }
    .preview svg { margin-left: 20px; }
    .preview dl { display: flex; gap: 16px; margin: 16px 0 0; }
    .preview dt { color: #5a7088; }
    .preview dd { margin: 0; }
    .status { display: flex; align-items: center; height: 29px; padding-left: 17px; color: #1e395b; }
    .status span { padding-right: 12px; margin-right: 13px; border-right: 1px solid #ececec; }
    .status .views { margin-left: auto; display: flex; padding-right: 5px; }
    .views button { width: 28px; height: 29px; }
    .views .on { background: #cbe8f6; border: 1px solid #26a0da; }
    properties-dialog { position: absolute; left: 1025px; top: 261px; width: 484px; }
  `];
  render() {
    const th = (label: string, sorted = false) => html`<th><button>${label}${sorted
      ? html`<span class="sort">${pic(10, 6, svg`<path d="M.5 5.500L5 1l4.500 4.500" stroke="#707070"/>`)}</span>` : nothing}</button></th>`;
    const crumb = (t: string) => html`${crumbSep}<button class="crumb">${t}</button>`;
    return html`
      <header class="title">
        <div class="quick">
          ${icon("folder")}<i></i>${pic(15, 18, checkDoc)}${icon("folder")}${caret}<i></i>
        </div>
        <span>Tudor</span>
        <div class="win">
          <button aria-label="Minimize">${pic(12, 12, svg`<path d="M0 5.500h12" stroke="#8c8c8c"/>`)}</button>
          <button aria-label="Restore">${pic(12, 12, svg`<path d="M.5 2.500h9v9h-9zM2.500 2.500v-2h9v9h-2" stroke="#8c8c8c"/>`)}</button>
          <button aria-label="Close">${pic(12, 12, svg`<path d="M.5.500l11 11M11.500.5l-11 11" stroke="#8c8c8c"/>`)}</button>
        </div>
      </header>
      <explorer-ribbon></explorer-ribbon>
      <div class="address">
        <div class="arrows">
          <button aria-label="Back">${pic(16, 12, svg`<path d="M16 6H1.500M6.500 1l-5 5 5 5" stroke="#6b6b6b" stroke-width="1.700"/>`)}</button>
          <button aria-label="Forward">${pic(16, 12, svg`<path d="M0 6h14.500M9.500 1l5 5-5 5" stroke="#d8d8d8" stroke-width="1.700"/>`)}</button>
          <button aria-label="Recent locations">${pic(10, 6, svg`<path d="M1 1l4 4 4-4" stroke="#6b6b6b" stroke-width="1.600"/>`)}</button>
          <button aria-label="Up">${pic(12, 15, svg`<path d="M5 15V1.500M0 6.500l5-5 5 5" stroke="#6b6b6b" stroke-width="1.700"/>`)}</button>
        </div>
        <div class="crumbs">
          ${icon("folder")}${["This PC", "Local Disk (C:)", "Users", "Tudor"].map(crumb)}
          <button class="drop" aria-label="Previous locations">${pic(12, 8, svg`<path d="M1 1.500l5 5 5-5" stroke="#707070" stroke-width="1.800"/>`)}</button>
          <button class="again" aria-label="Refresh">${pic(14, 14, svg`<path d="M3 2.500a6 6 0 1 0 7.500-.5M1 1h4.500v4.500" stroke="#707070" stroke-width="1.800"/>`)}</button>
        </div>
        <label class="search"><input type="text" placeholder="Search Tudor" aria-label="Search Tudor">
          ${pic(14, 14, svg`<circle cx="9" cy="5" r="4" stroke="#707070" stroke-width="2"/><path d="M6 8L1 13" stroke="#707070" stroke-width="2.200"/>`)}</label>
      </div>
      <main class="main">
        <nav class="nav">
          ${navItems.map(([label, ic, level]) => html`<a href="#" class=${classMap({ top: level === 1, sel: label === "Local Disk (C:)" })}>${icon(ic)}${label}</a>`)}
        </nav>
        <scroll-rail .from=${54} .span=${46}></scroll-rail>
        <section class="files">
          <table>
            <colgroup><col class="c1"><col class="c2"><col class="c3"><col class="c4"></colgroup>
            <thead><tr>${th("Name", true)}${th("Date modified")}${th("Type")}${th("Size")}</tr></thead>
            <tbody>
              ${entries.map(([name, ic, date = usual, type = "File folder", size = ""]) => html`
                <tr class=${classMap({ sel: name === "Cookies" })}><td><div class="file">${icon(ic)}${name}</div></td><td>${date}</td><td>${type}</td><td>${size}</td></tr>`)}
            </tbody>
          </table>
        </section>
        <scroll-rail .from=${0} .span=${86}></scroll-rail>
        <aside class="preview">
          <h1>Cookies</h1>
          <p>File folder</p>
          ${pic(78, 104, svg`
            <defs><linearGradient id="fb" x1="0" y1="1" x2="1" y2=".8"><stop offset="0" stop-color="#eac45c"/><stop offset="1" stop-color="#ffe182"/></linearGradient>
            <linearGradient id="ff" x1="0" y1="0" x2="1" y2="1"><stop offset="0" stop-color="#ffe8a4"/><stop offset="1" stop-color="#ffe08a"/></linearGradient></defs>
            <path d="M68 86l8-3-3-1h-6zM21 103l10-4-6-2z" fill="#ededed"/>
            <path d="M1 1h60l1 1v52l6 5v27H16z" fill="url(#fb)"/><path d="M1 1l23 18v54l-2 5v25L1 87z" fill="url(#ff)"/>`)}
          <dl><dt>Date modified:</dt><dd>6/19/2024 11:55 AM</dd></dl>
        </aside>
      </main>
      <footer class="status">
        <span>32 items</span><span>1 item selected</span>
        <div class="views">
          <button class="on" aria-label="Details view">${pic(18, 16, svg`<path d="M.5.500h5v5h-5zM.5 5.500h5v5h-5zM.5 10.500h5v5h-5z" fill="#fff" stroke="#9a9a9a"/><path d="M2 2h2v2H2z" fill="#2f78c0"/><path d="M2 7h2v2H2z" fill="#4f9a4a"/><path d="M2 12h2v2H2z" fill="#c4402c"/><path d="M7 2.500h5M13 2.500h5M7 7.500h5M13 7.500h5M7 12.500h5M13 12.500h5" stroke="#6b6b6b"/>`)}</button>
          <button aria-label="Large icons view">${pic(18, 14, svg`<rect x=".5" y=".5" width="17" height="13" fill="#fff" stroke="#9a9a9a"/><path d="M2 2h14v10H2z" fill="#79b4f0"/><path d="M2 6c4 0 5 2 14 2v4H2z" fill="#33734f"/><path d="M2 10l14-1v3H2z" fill="#3a7fb5"/>`)}</button>
        </div>
      </footer>
      <task-bar></task-bar>
      <properties-dialog></properties-dialog>`;
  }
}
